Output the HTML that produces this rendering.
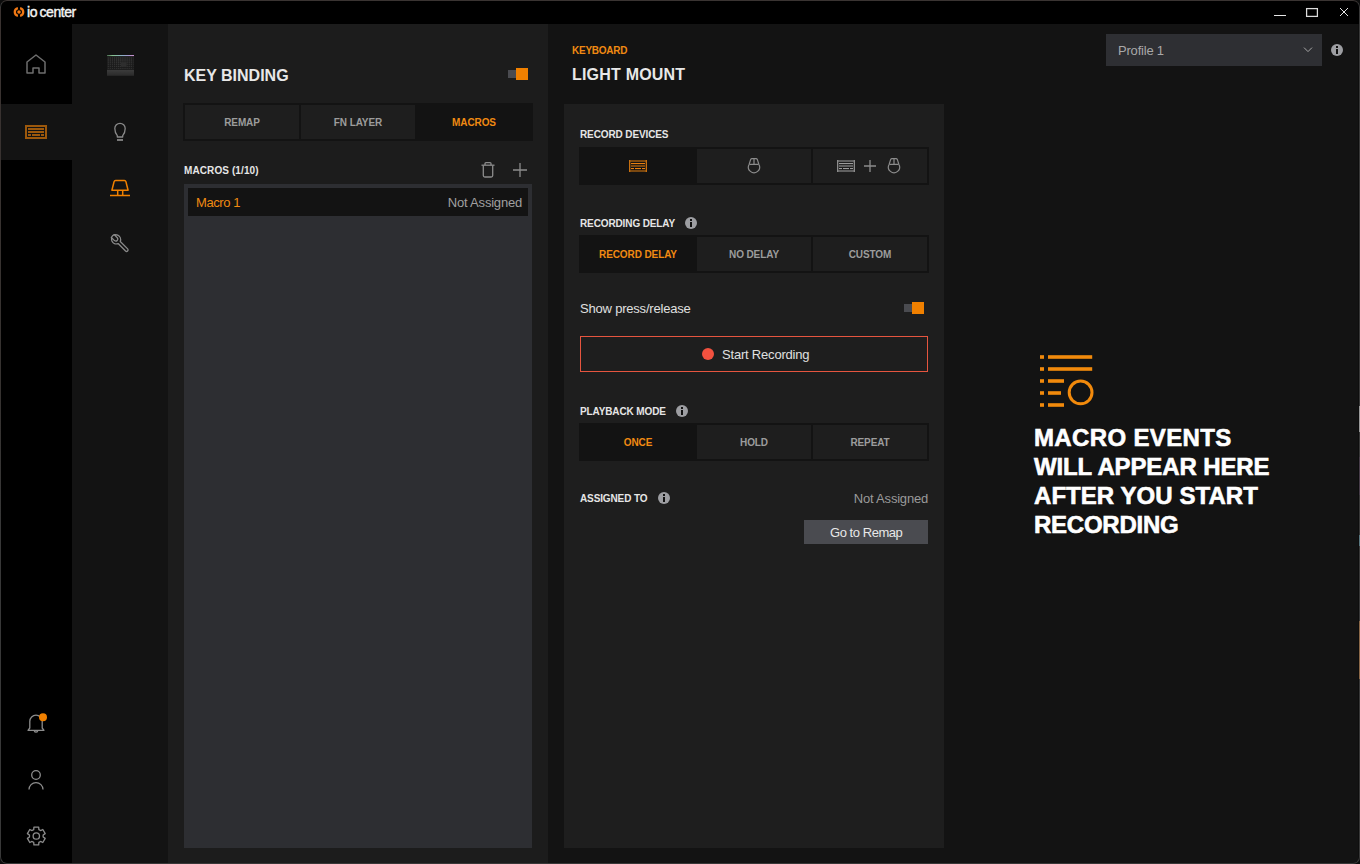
<!DOCTYPE html>
<html><head><meta charset="utf-8">
<style>
*{margin:0;padding:0;box-sizing:border-box}
html,body{width:1360px;height:864px;overflow:hidden;background:#0c0c0c}
body{font-family:"Liberation Sans",sans-serif;position:relative}
.a{position:absolute}
#win{position:absolute;left:0;top:0;width:1360px;height:864px;overflow:hidden;background:#131313}
#frame{position:absolute;left:0;top:0;width:1360px;height:864px;border:1px solid #383838;border-top-color:#3a3432;border-radius:7px;box-shadow:0 0 0 12px #0c0c0c;pointer-events:none}
#clip{position:absolute;left:0;top:0;width:1360px;height:864px;overflow:hidden}
.t{position:absolute;white-space:nowrap;line-height:1}
.lbl{font-weight:bold;font-size:10px;color:#e6e6e6;letter-spacing:-0.12px}
.seg{position:absolute;background:#131313}
.seg .s{position:absolute;background:#1e1e1e;display:flex;align-items:center;justify-content:center;font-weight:bold;font-size:10px;letter-spacing:-0.1px;color:#9c9c9c}
.r13{font-size:13px;letter-spacing:-0.2px}
.seg .s.on{background:#131313;color:#f08a12}
.info{position:absolute;width:12px;height:12px;border-radius:50%;background:#9a9a9a}
.info:before{content:"";position:absolute;left:5px;top:2px;width:2px;height:2px;background:#1e1e1e}
.info:after{content:"";position:absolute;left:5px;top:5px;width:2px;height:5px;background:#1e1e1e}
</style></head><body>
<div id="win">
  <!-- title bar -->
  <div class="a" style="left:0;top:0;width:1360px;height:24px;background:#000"></div>
  <!-- sidebar 1 -->
  <div class="a" style="left:0;top:24px;width:72px;height:840px;background:#000"></div>
  <div class="a" style="left:0;top:104px;width:72px;height:56px;background:#131313"></div>
  <!-- sidebar 2 -->
  <div class="a" style="left:72px;top:24px;width:96px;height:840px;background:#131313"></div>
  <!-- key binding panel -->
  <div class="a" style="left:168px;top:24px;width:380px;height:840px;background:#1c1c1c"></div>
  <!-- right area -->
  <div class="a" style="left:548px;top:24px;width:812px;height:840px;background:#131313"></div>
  <div class="a" style="left:1358px;top:24px;width:1px;height:840px;background:#0e0e0e"></div>
  <!-- middle panel -->
  <div class="a" style="left:564px;top:104px;width:380px;height:744px;background:#1e1e1e"></div>

  <!-- key binding content -->
  <div class="t" style="left:184px;top:68px;font-weight:bold;font-size:16px;color:#e8e8e8">KEY BINDING</div>
  <div class="a" style="left:508px;top:70px;width:12px;height:8px;background:#4a4b50"></div>
  <div class="a" style="left:516px;top:68px;width:12px;height:12px;background:#f08000"></div>

  <div class="seg" style="left:183px;top:103px;width:350px;height:38px">
    <div class="s" style="left:2px;top:2px;width:114px;height:34px">REMAP</div>
    <div class="s" style="left:118px;top:2px;width:114px;height:34px">FN LAYER</div>
    <div class="s on" style="left:234px;top:2px;width:114px;height:34px">MACROS</div>
  </div>

  <div class="t lbl" style="left:184px;top:166px;letter-spacing:0.1px">MACROS (1/10)</div>
  <div class="a" style="left:184px;top:184px;width:348px;height:664px;background:#2d2e32"></div>
  <div class="a" style="left:188px;top:188px;width:340px;height:28px;background:#131313"></div>
  <div class="t r13" style="left:196px;top:196px;letter-spacing:-0.4px;color:#f08a12">Macro 1</div>
  <div class="t r13" style="right:838px;top:196px;color:#a0a0a0">Not Assigned</div>

  <!-- middle content -->
  <div class="t" style="left:572px;top:46px;font-weight:bold;font-size:10px;letter-spacing:-0.25px;color:#f08a12">KEYBOARD</div>
  <div class="t" style="left:572px;top:67px;font-weight:bold;font-size:16px;letter-spacing:0.2px;color:#e8e8e8">LIGHT MOUNT</div>

  <div class="t lbl" style="left:580px;top:130px">RECORD DEVICES</div>
  <div class="seg" style="left:579px;top:147px;width:350px;height:38px">
    <div class="s on" style="left:2px;top:2px;width:114px;height:34px"></div>
    <div class="s" style="left:118px;top:2px;width:114px;height:34px"></div>
    <div class="s" style="left:234px;top:2px;width:114px;height:34px"></div>
  </div>

  <div class="t lbl" style="left:580px;top:219px">RECORDING DELAY</div>
  <div class="seg" style="left:579px;top:235px;width:350px;height:38px">
    <div class="s on" style="left:2px;top:2px;width:114px;height:34px">RECORD DELAY</div>
    <div class="s" style="left:118px;top:2px;width:114px;height:34px">NO DELAY</div>
    <div class="s" style="left:234px;top:2px;width:114px;height:34px">CUSTOM</div>
  </div>

  <div class="t r13" style="left:580px;top:302px;color:#e0e0e0">Show press/release</div>
  <div class="a" style="left:904px;top:304px;width:12px;height:8px;background:#4a4b50"></div>
  <div class="a" style="left:912px;top:302px;width:12px;height:12px;background:#f08000"></div>

  <div class="a" style="left:580px;top:336px;width:348px;height:36px;border:1px solid #e6553f"></div>
  <div class="a" style="left:702px;top:348px;width:12px;height:12px;border-radius:50%;background:#f2513f"></div>
  <div class="t r13" style="left:722px;top:348px;color:#e0e0e0">Start Recording</div>

  <div class="t lbl" style="left:580px;top:407px">PLAYBACK MODE</div>
  <div class="seg" style="left:579px;top:423px;width:350px;height:38px">
    <div class="s on" style="left:2px;top:2px;width:114px;height:34px">ONCE</div>
    <div class="s" style="left:118px;top:2px;width:114px;height:34px">HOLD</div>
    <div class="s" style="left:234px;top:2px;width:114px;height:34px">REPEAT</div>
  </div>

  <div class="t lbl" style="left:580px;top:494px">ASSIGNED TO</div>
  <div class="t r13" style="right:432px;top:492px;color:#9a9a9a">Not Assigned</div>
  <div class="a" style="left:804px;top:520px;width:124px;height:24px;background:#4a4b50"></div>
  <div class="t r13" style="left:830px;top:526px;letter-spacing:-0.45px;color:#e8e8e8">Go to Remap</div>

  <div class="t" style="left:27px;top:5px;font-size:14px;letter-spacing:-0.45px;word-spacing:-0.9px;color:#f4f4f4;-webkit-text-stroke:0.4px #f4f4f4">io center</div>


  <!-- right -->
  <div class="a" style="left:1106px;top:34px;width:216px;height:32px;background:#2e2f33"></div>
  <div class="t r13" style="left:1118px;top:44px;color:#a8a8a8">Profile 1</div>

  <div class="t" style="left:1034px;top:423px;font-weight:bold;font-size:24px;line-height:29px;color:#fff;-webkit-text-stroke:0.6px #fff"><span style="display:block;letter-spacing:0.35px">MACRO EVENTS</span><span style="display:block;letter-spacing:-0.12px">WILL APPEAR HERE</span><span style="display:block;letter-spacing:0.05px">AFTER YOU START</span><span style="display:block;letter-spacing:-0.25px">RECORDING</span></div>
<svg class="a" style="left:0;top:0" width="1360" height="864" viewBox="0 0 1360 864">
 <!-- logo -->
 <g fill="none" stroke="#f07814" stroke-width="2.3">
  <path d="M17.9 8.1 A4 4 0 0 0 17.9 15.9"/>
  <path d="M20.1 8.1 A4 4 0 0 1 20.1 15.9"/>
 </g>
 <circle cx="19" cy="12" r="1.8" fill="#f07814"/>
 <!-- window controls -->
 <rect x="1274" y="15" width="12" height="1" fill="#e6e6e6"/>
 <rect x="1306.6" y="8.6" width="10.8" height="7.8" fill="none" stroke="#dcdcdc" stroke-width="1.25"/>
 <path d="M1340 8 L1348 16 M1348 8 L1340 16" stroke="#e6e6e6" stroke-width="1"/>
 <!-- sidebar1 icons -->
 <path d="M27 62 L36 55 L45 62 V73 H39 V68 H33 V73 H27 Z" fill="none" stroke="#6e6e6e" stroke-width="1.5" stroke-linejoin="round"/>
 <g fill="none" stroke="#9c580c" stroke-width="2"><rect x="26" y="126" width="20" height="12"/></g>
 <g fill="#9c580c"><rect x="28" y="128" width="16" height="2"/><rect x="28" y="131" width="16" height="2"/><rect x="28" y="134" width="3" height="2"/><rect x="32" y="134" width="8" height="2"/><rect x="41" y="134" width="3" height="2"/></g>
 <g fill="none" stroke="#8c8c8c" stroke-width="1.3">
  <path d="M28 730.3 L29.8 728 V721.3 A6.2 6.2 0 0 1 42.2 721.3 V728 L44 730.3 Z" stroke-linejoin="round"/>
  <path d="M34.3 731 A1.8 1.8 0 0 0 37.7 731"/>
  <circle cx="36" cy="775" r="4.3"/>
  <path d="M29 789.6 A7 7 0 0 1 43 789.6"/>
  <path d="M38.88 829.60 L38.68 827.11 L33.92 827.11 L33.72 829.60 L32.05 830.56 L29.79 829.49 L27.41 833.62 L29.47 835.04 L29.47 836.96 L27.41 838.38 L29.79 842.51 L32.05 841.44 L33.72 842.40 L33.92 844.89 L38.68 844.89 L38.88 842.40 L40.55 841.44 L42.81 842.51 L45.19 838.38 L43.13 836.96 L43.13 835.04 L45.19 833.62 L42.81 829.49 L40.55 830.56 Z" stroke-linejoin="round"/>
  <circle cx="36.3" cy="836" r="3.2"/>
 </g>
 <circle cx="43" cy="717.2" r="4" fill="#f08000"/>

 <defs>
  <linearGradient id="kbs" x1="0" x2="1" y1="0" y2="0"><stop offset="0" stop-color="#4a6a50"/><stop offset="0.2" stop-color="#86c08e"/><stop offset="0.55" stop-color="#8ab0c4"/><stop offset="0.8" stop-color="#a898d0"/><stop offset="1" stop-color="#d090d0"/></linearGradient>
  <linearGradient id="kbw" x1="0" x2="0" y1="0" y2="1"><stop offset="0" stop-color="#3c3c3c"/><stop offset="1" stop-color="#2a2a2a"/></linearGradient>
  <pattern id="kbk" width="2.1" height="2.1" patternUnits="userSpaceOnUse" x="107.6" y="57.3"><rect width="1.2" height="1.2" fill="#3a3a3a"/></pattern>
 </defs>
 <rect x="107" y="55" width="27" height="1.3" fill="url(#kbs)"/>
 <rect x="107" y="56.3" width="27" height="13.4" fill="#1b1b1b"/>
 <rect x="107.5" y="57.3" width="26" height="11.5" fill="url(#kbk)"/>
 <rect x="121" y="62.5" width="5.5" height="4" fill="#2e2e2e"/>
 <rect x="107" y="69.8" width="27" height="6" fill="url(#kbw)"/>
 <!-- sidebar2 icons -->
 <g fill="none" stroke="#8a8a8a" stroke-width="1.3">
  <path d="M117.3 137 V135.6 C115.6 133.6 114.8 131.5 114.8 128.5 A5.2 5.2 0 0 1 125.2 128.5 C125.2 131.5 124.4 133.6 122.7 135.6 V137 Z" stroke-linejoin="round"/>
  <path d="M118.14 243.56 L125.54 250.96 A1.5 1.5 0 0 0 127.66 248.84 L120.26 241.44 A4.9 4.9 0 0 0 111.32 237.45 L114.49 240.61 A2.0 2.0 0 0 0 117.31 237.79 L114.15 234.62 A4.9 4.9 0 0 0 118.14 243.56 Z" stroke-linejoin="round"/>
 </g>
 <rect x="117" y="139" width="6" height="2" fill="#7a7a7a"/>
 <g fill="none" stroke="#f08000" stroke-width="1.5">
  <path d="M115.6 180.4 H124.4 Q125.6 180.4 125.9 181.6 L128.1 190.2 H111.9 L114.1 181.6 Q114.4 180.4 115.6 180.4 Z" stroke-linejoin="round"/>
  <path d="M117.7 190.5 V195 M122.7 190.5 V195"/>
  <path d="M110 195.5 H130"/>
 </g>
 <!-- trash / plus -->
 <g fill="none" stroke="#8c8c8c" stroke-width="1.3">
  <path d="M481.5 165.2 H494.5"/>
  <path d="M485 165 V163.6 Q485 162.6 486 162.6 H490 Q491 162.6 491 163.6 V165"/>
  <path d="M483.3 165.5 V175.5 Q483.3 177 484.8 177 H491.2 Q492.7 177 492.7 175.5 V165.5"/>
  <path d="M513 170 H527 M520 163 V177"/>
 </g>
 <!-- device icons -->
 <g>
  <rect x="629" y="160" width="18" height="2" fill="#7a4810"/>
  <rect x="629" y="170" width="18" height="2" fill="#7a4810"/>
  <rect x="629" y="160" width="1.3" height="12" fill="#c87010"/>
  <rect x="645.7" y="160" width="1.3" height="12" fill="#c87010"/>
  <rect x="631" y="163" width="14" height="1.1" fill="#e88010"/>
  <rect x="631" y="165" width="14" height="2" fill="#7a4810"/>
  <rect x="631" y="168" width="3" height="1.1" fill="#e88010"/>
  <rect x="635" y="168" width="6" height="1.1" fill="#e88010"/>
  <rect x="642" y="168" width="3" height="1.1" fill="#e88010"/>
 </g>
 <g>
  <rect x="837" y="160" width="18" height="2" fill="#606060"/>
  <rect x="837" y="170" width="18" height="2" fill="#606060"/>
  <rect x="837" y="160" width="1.3" height="12" fill="#8c8c8c"/>
  <rect x="853.7" y="160" width="1.3" height="12" fill="#8c8c8c"/>
  <rect x="839" y="163" width="14" height="1.1" fill="#9c9c9c"/>
  <rect x="839" y="165" width="14" height="2" fill="#606060"/>
  <rect x="839" y="168" width="3" height="1.1" fill="#9c9c9c"/>
  <rect x="843" y="168" width="6" height="1.1" fill="#9c9c9c"/>
  <rect x="850" y="168" width="3" height="1.1" fill="#9c9c9c"/>
 </g>
 <path d="M864 166 H876 M870 160 V172" fill="none" stroke="#8c8c8c" stroke-width="1.3"/>
 <g fill="none" stroke="#8c8c8c" stroke-width="1.2">
  <path d="M749.2 164.2 L750.6 159.6 Q751 158.6 752 158.6 H756 Q757 158.6 757.4 159.6 L758.8 164.2 A5.6 5.6 0 1 1 749.2 164.2 Z"/>
  <path d="M749.5 164.3 H758.5 M754 158.8 V164"/>
  <path d="M889.2 164.2 L890.6 159.6 Q891 158.6 892 158.6 H896 Q897 158.6 897.4 159.6 L898.8 164.2 A5.6 5.6 0 1 1 889.2 164.2 Z"/>
  <path d="M889.5 164.3 H898.5 M894 158.8 V164"/>
 </g>
 <!-- info icons -->
 <g fill="#9d9ea2"><circle cx="691" cy="223" r="6"/><circle cx="682" cy="411" r="6"/><circle cx="664" cy="498" r="6"/><circle cx="1337" cy="50" r="6"/></g>
 <g fill="#111"><rect x="690" y="219" width="2" height="2"/><rect x="690" y="222" width="2" height="5"/>
 <rect x="681" y="407" width="2" height="2"/><rect x="681" y="410" width="2" height="5"/>
 <rect x="663" y="494" width="2" height="2"/><rect x="663" y="497" width="2" height="5"/>
 <rect x="1336" y="46" width="2" height="2"/><rect x="1336" y="49" width="2" height="5"/></g>
 <!-- chevron -->
 <path d="M1304 47.6 L1308 51.6 L1312 47.6" fill="none" stroke="#a8a8a8" stroke-width="1"/>
 <!-- macro events illustration -->
 <g fill="#f28a0c">
  <rect x="1040" y="355.2" width="4" height="3.6"/><rect x="1048" y="355.2" width="44.2" height="3.6"/>
  <rect x="1040" y="367.2" width="4" height="3.6"/><rect x="1048" y="367.2" width="44.2" height="3.6"/>
  <rect x="1040" y="379.2" width="4" height="3.6"/><rect x="1048" y="379.2" width="16" height="3.6"/>
  <rect x="1040" y="391.2" width="4" height="3.6"/><rect x="1048" y="391.2" width="13" height="3.6"/>
  <rect x="1040" y="403.2" width="4" height="3.6"/><rect x="1048" y="403.2" width="16" height="3.6"/>
 </g>
 <circle cx="1080.6" cy="392.4" r="11.4" fill="none" stroke="#f28a0c" stroke-width="3"/>
</svg>
</div>
<div id="clip"><div id="frame"></div>
 <div class="a" style="left:0;top:8px;width:1px;height:848px;background:linear-gradient(#3a3230,#363230 45%,#383838 60%,#383838)"></div>
 <div class="a" style="left:1359px;top:406px;width:1px;height:26px;background:#9a9a9a"></div>
 <div class="a" style="left:1359px;top:457px;width:1px;height:38px;background:#463c48"></div>
 <div class="a" style="left:1359px;top:535px;width:1px;height:11px;background:#5a7880"></div>
 <div class="a" style="left:1359px;top:621px;width:1px;height:58px;background:#8a6848"></div>
</div>
</body></html>
